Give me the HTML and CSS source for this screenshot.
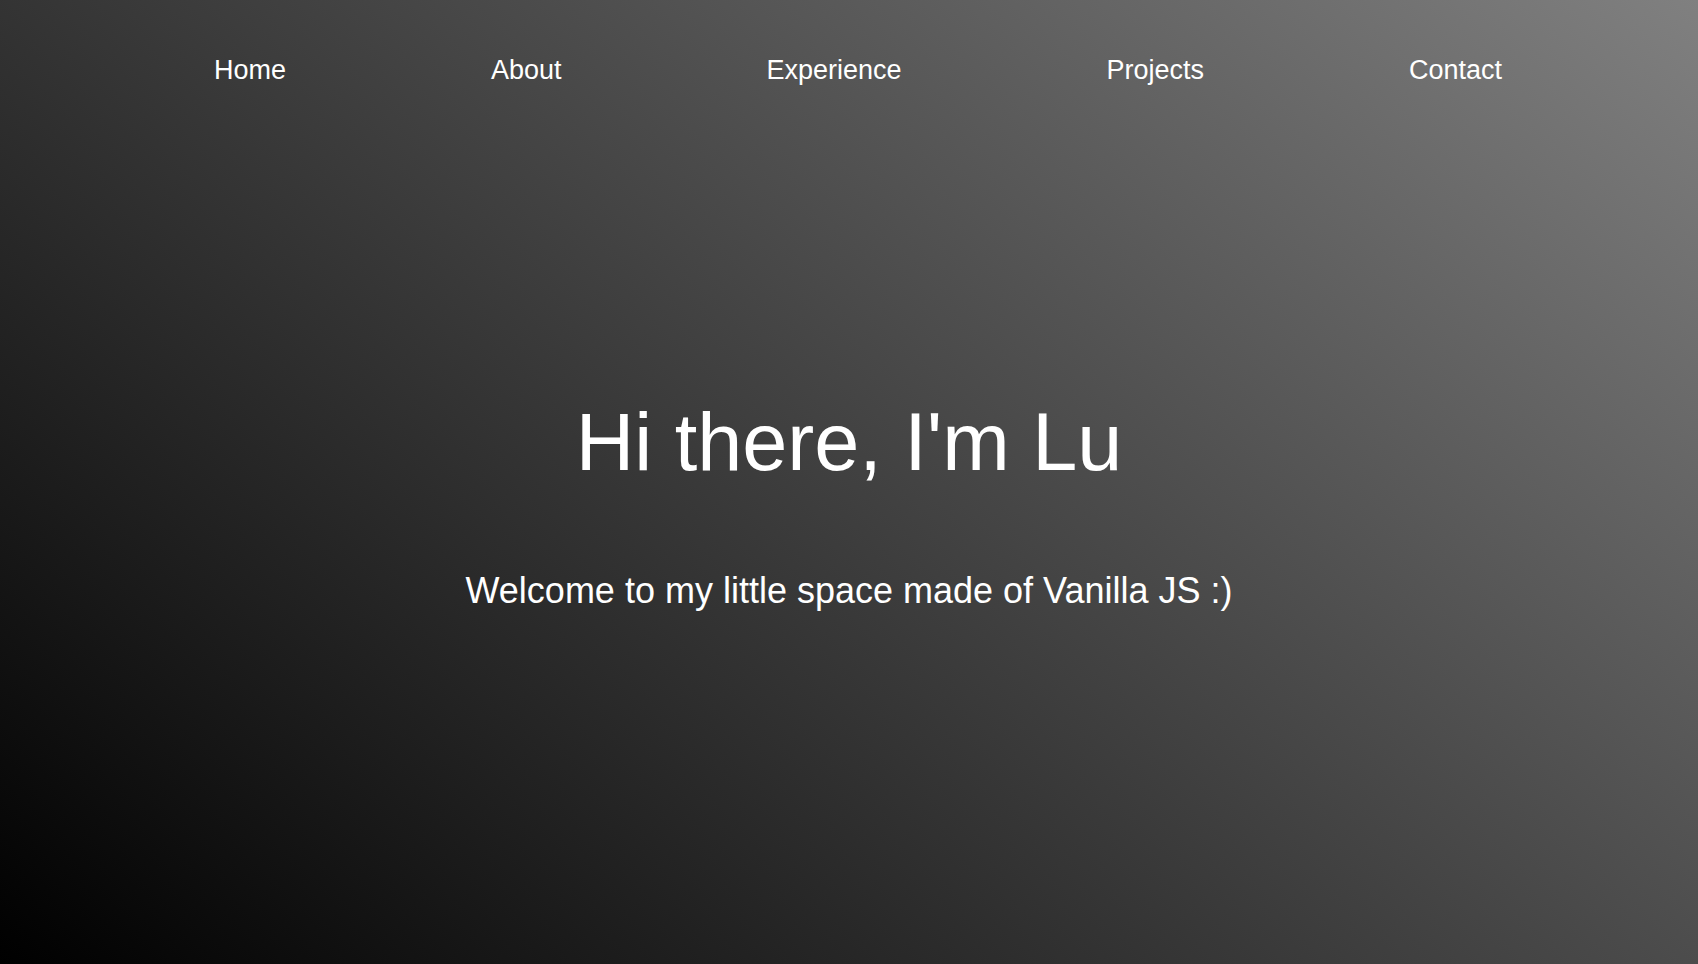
FILE: index.html
```html
<!DOCTYPE html>
<html lang="en">
<head>
<meta charset="utf-8">
<title>Lu</title>
<link rel="stylesheet" href="styles.css">
</head>
<body>
<div class="page">
  <nav class="nav">
    <a class="nav-link" href="#home">Home</a>
    <a class="nav-link" href="#about">About</a>
    <a class="nav-link" href="#experience">Experience</a>
    <a class="nav-link" href="#projects">Projects</a>
    <a class="nav-link" href="#contact">Contact</a>
  </nav>
  <section class="hero">
    <h1 class="hero-title">Hi there, I'm Lu</h1>
    <p class="hero-sub">Welcome to my little space made of Vanilla JS :)</p>
  </section>
</div>
</body>
</html>
```
FILE: styles.css
```css
html, body {
  margin: 0;
  padding: 0;
  height: 100%;
}
body {
  font-family: "Liberation Sans", Arial, sans-serif;
  color: #ffffff;
  background: linear-gradient(40deg, #000000 0%, #808080 100%);
  overflow: hidden;
}
.page {
  height: 964px;
  display: flex;
  flex-direction: column;
}
.nav {
  display: flex;
  justify-content: space-between;
  padding: 55px 196px 0 214px;
}
.nav-link {
  color: #ffffff;
  text-decoration: none;
  font-size: 27px;
  line-height: 31px;
}
.hero {
  display: flex;
  flex-direction: column;
  align-items: center;
  padding-top: 310px;
}
.hero-title {
  margin: 0;
  font-size: 81px;
  font-weight: 400;
  line-height: 93px;
}
.hero-sub {
  margin: 81px 0 0;
  font-size: 36px;
  line-height: 41px;
}
```
